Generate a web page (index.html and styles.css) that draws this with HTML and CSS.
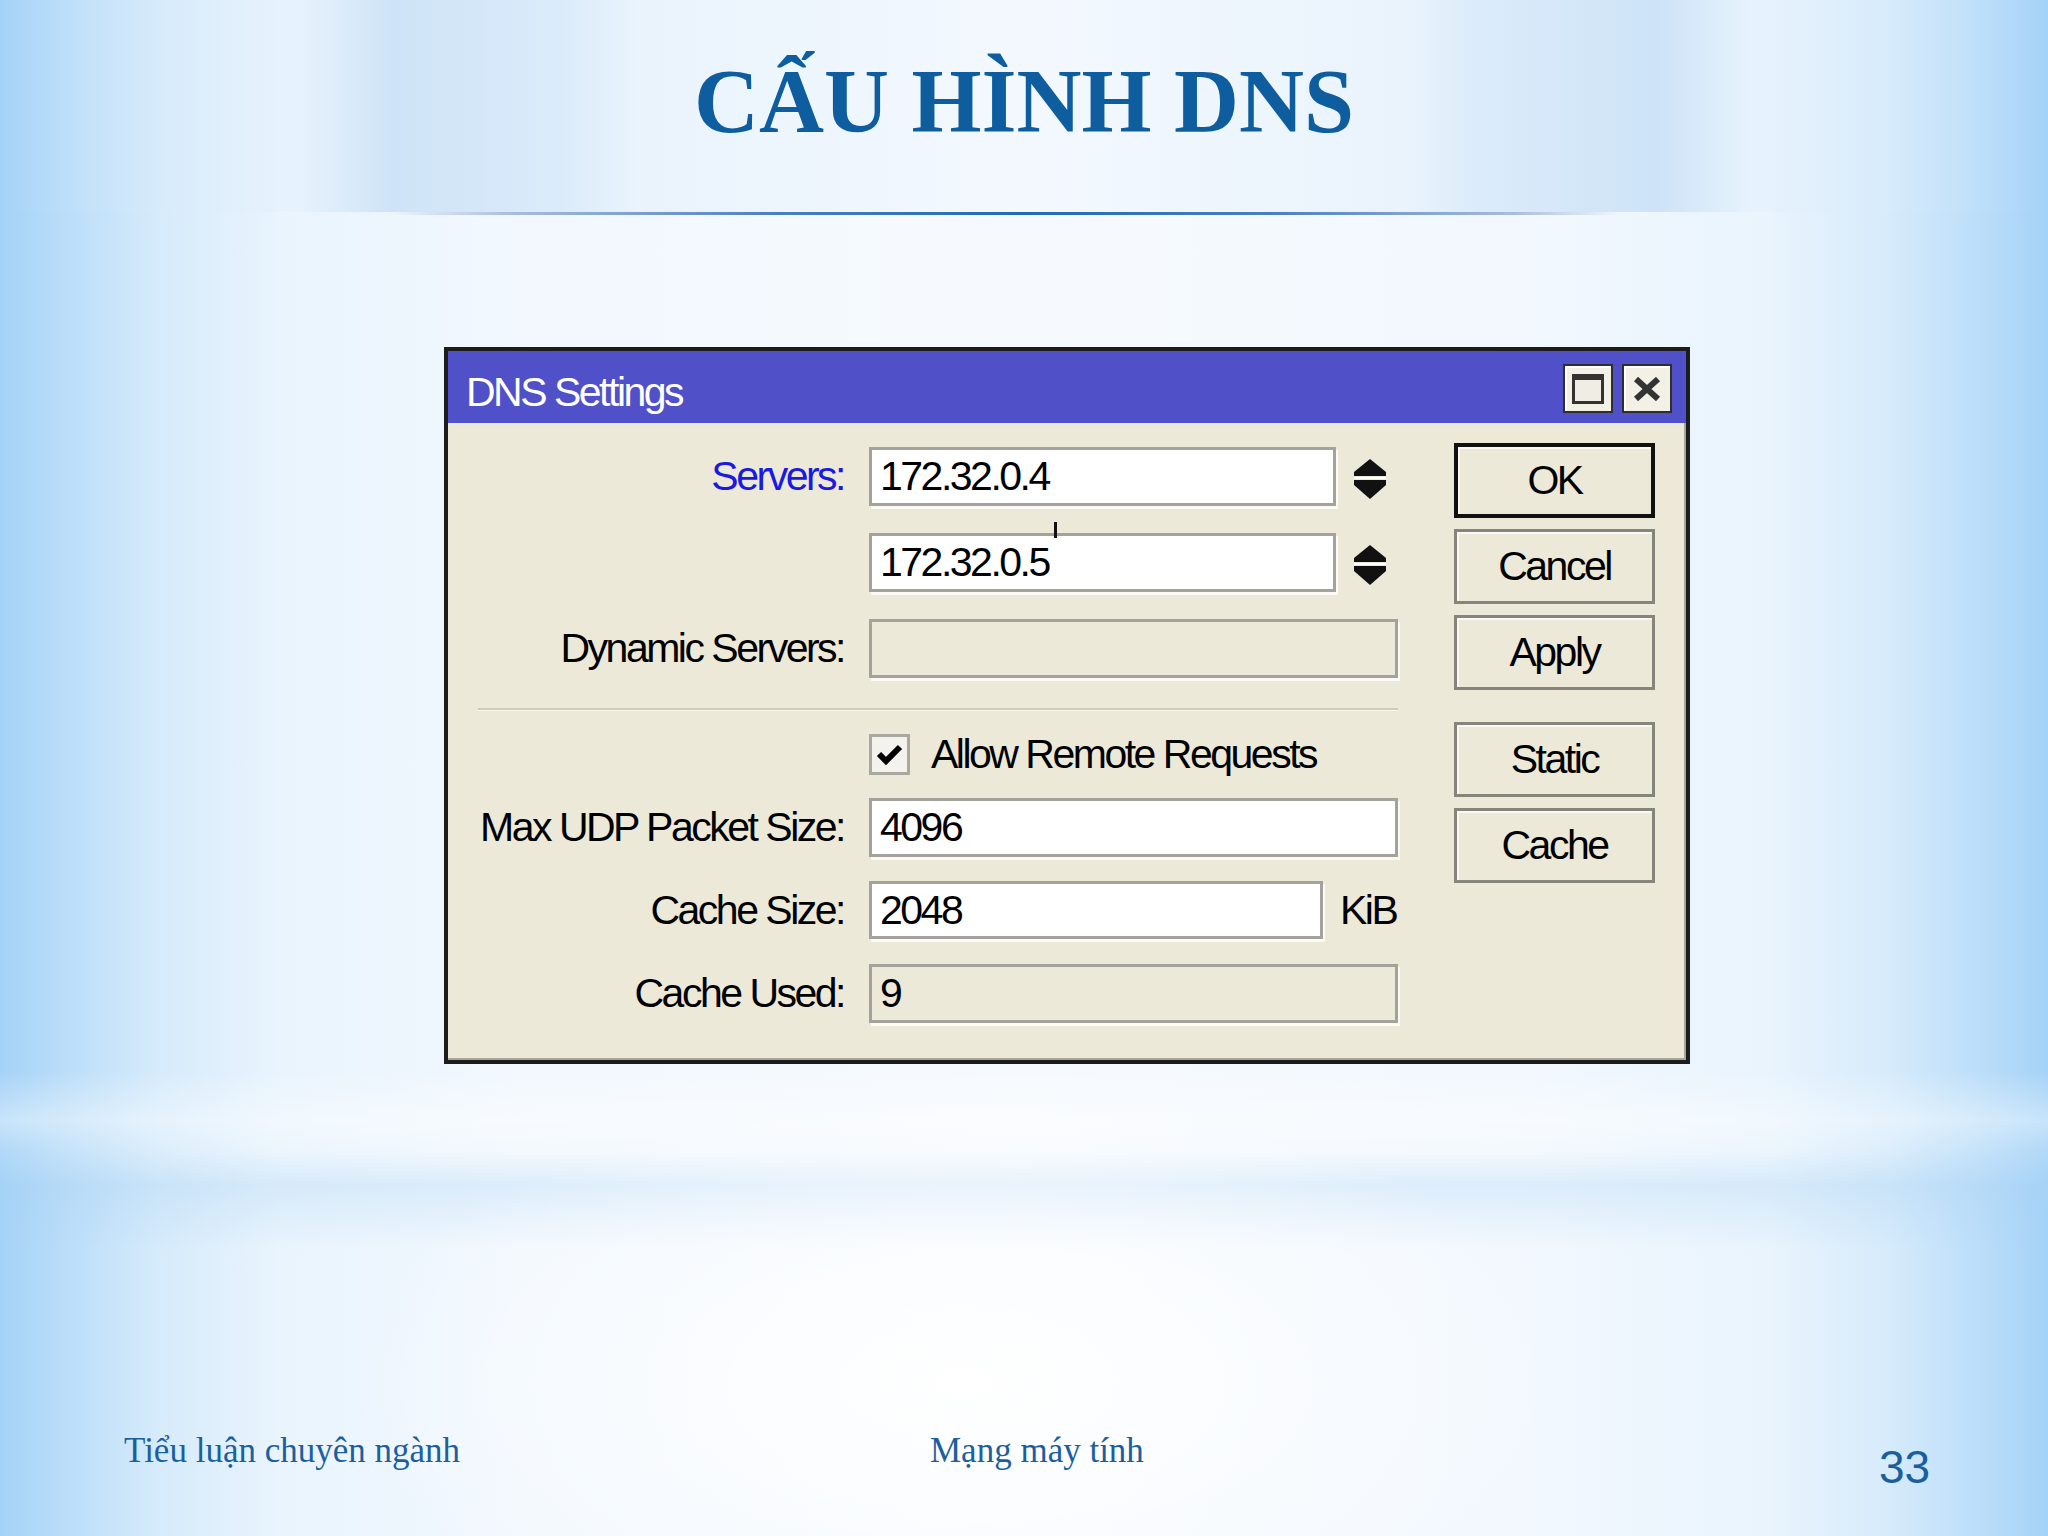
FILE: index.html
```html
<!DOCTYPE html>
<html lang="vi">
<head>
<meta charset="utf-8">
<title>Cấu hình DNS</title>
<link rel="stylesheet" href="styles.css">
</head>
<body>
<div class="slide">
  <header class="head">
    <h1 class="title">CẤU HÌNH DNS</h1>
  </header>
  <div class="rule"></div>

  <div class="dialog">
    <div class="titlebar">
      <span class="wtitle">DNS Settings</span>
      <div class="wbtns">
        <div class="wbtn"><span class="maxicon"></span></div>
        <div class="wbtn">
          <svg class="closeicon" width="28" height="24" viewBox="0 0 28 24">
            <path d="M3 2 L25 22 M25 2 L3 22" stroke="#333" stroke-width="6" fill="none"/>
          </svg>
        </div>
      </div>
    </div>

    <div class="dbody">
      <div class="form">
        <div class="row r1">
          <div class="lbl blue">Servers:</div>
          <div class="field w-short">172.32.0.4</div>
          <svg class="spin" width="32" height="40" viewBox="0 0 32 40">
            <polygon points="16,0 32,13 32,17 0,17 0,13" fill="#111"/>
            <rect x="0" y="18" width="32" height="2" fill="#fff"/>
            <polygon points="0,21 32,21 32,26 16,40 0,26" fill="#111"/>
          </svg>
        </div>
        <div class="row r2">
          <div class="lbl"></div>
          <div class="field w-short">172.32.0.5<span class="cursor"></span></div>
          <svg class="spin" width="32" height="40" viewBox="0 0 32 40">
            <polygon points="16,0 32,13 32,17 0,17 0,13" fill="#111"/>
            <rect x="0" y="18" width="32" height="2" fill="#fff"/>
            <polygon points="0,21 32,21 32,26 16,40 0,26" fill="#111"/>
          </svg>
        </div>
        <div class="row r3">
          <div class="lbl">Dynamic Servers:</div>
          <div class="field w-full disabled"></div>
        </div>
        <div class="sep"></div>
        <div class="row rc">
          <div class="lbl"></div>
          <div class="check">
            <svg width="28" height="22" viewBox="0 0 28 22">
              <path d="M3 10 L10 17 L24 3" stroke="#000" stroke-width="6" fill="none"/>
            </svg>
          </div>
          <span class="ctext">Allow Remote Requests</span>
        </div>
        <div class="row r5">
          <div class="lbl">Max UDP Packet Size:</div>
          <div class="field w-full">4096</div>
        </div>
        <div class="row r6">
          <div class="lbl">Cache Size:</div>
          <div class="field w-mid">2048</div>
          <span class="unit">KiB</span>
        </div>
        <div class="row r7">
          <div class="lbl">Cache Used:</div>
          <div class="field w-full disabled">9</div>
        </div>
      </div>

      <div class="btns">
        <div class="btn default">OK</div>
        <div class="btn">Cancel</div>
        <div class="btn">Apply</div>
        <div class="btn gap">Static</div>
        <div class="btn">Cache</div>
      </div>
    </div>
  </div>

  <footer class="foot">
    <span class="f1">Tiểu luận chuyên ngành</span>
    <span class="f2">Mạng máy tính</span>
    <span class="f3">33</span>
  </footer>
</div>
</body>
</html>
```

FILE: styles.css
```css
html, body {
  margin: 0;
  padding: 0;
}

.slide {
  width: 2048px;
  height: 1536px;
  overflow: hidden;
  font-family: "Liberation Sans", Arial, sans-serif;
  background:
    radial-gradient(ellipse 620px 300px at 47% 90%, rgba(255,255,255,0.95), rgba(255,255,255,0) 100%),
    linear-gradient(to bottom,
      rgba(255,255,255,0) 0px,
      rgba(255,255,255,0) 1070px,
      rgba(255,255,255,0.4) 1120px,
      rgba(255,255,255,0.15) 1150px,
      rgba(170,210,243,0.3) 1185px,
      rgba(255,255,255,0) 1250px),
    linear-gradient(to right,
      #a4d2f7 0px,
      #bcdef9 70px,
      #d6ebfb 160px,
      #e9f4fd 280px,
      #f2f8fe 520px,
      #f6fafe 1024px,
      #f2f8fe 1528px,
      #e9f4fd 1768px,
      #d6ebfb 1888px,
      #bcdef9 1978px,
      #a4d2f7 2048px);
}

/* ---------- header ---------- */
.head {
  height: 212px;
  box-sizing: border-box;
  padding-top: 57px;
  background: linear-gradient(to right,
    rgba(255,255,255,0) 0px,
    rgba(220,236,250,0.25) 300px,
    rgba(180,212,242,0.55) 392px,
    rgba(195,222,246,0.5) 560px,
    rgba(228,240,251,0.6) 640px,
    rgba(240,247,254,0.6) 1024px,
    rgba(228,240,251,0.6) 1404px,
    rgba(195,222,246,0.5) 1480px,
    rgba(180,212,242,0.55) 1659px,
    rgba(220,236,250,0.25) 1750px,
    rgba(255,255,255,0) 2048px);
}

.title {
  margin: 0;
  text-align: center;
  font-family: "Liberation Serif", "Times New Roman", serif;
  font-weight: bold;
  font-size: 90px;
  line-height: 90px;
  color: #0d5d9f;
}

.rule {
  height: 3px;
  background: linear-gradient(to right,
    rgba(120,150,200,0) 19%,
    rgba(120,150,200,0.6) 25%,
    #4a7fbf 38%,
    #1f6cb3 50%,
    #4a7fbf 62%,
    rgba(120,150,200,0.6) 74%,
    rgba(120,150,200,0) 79%);
}

/* ---------- dialog ---------- */
.dialog {
  margin-top: 132px;
  margin-left: 444px;
  width: 1246px;
  box-sizing: border-box;
  border: 4px solid #1c1c1c;
  background: #ece9d8;
  box-shadow: inset -2px -2px 0 #a8a69a;
}

.titlebar {
  height: 72px;
  background: #5050c9;
  display: flex;
  justify-content: space-between;
  align-items: flex-start;
  padding: 0 14px 0 18px;
}

.wtitle {
  margin-top: 21px;
  color: #ffffff;
  font-size: 41px;
  line-height: 41px;
  letter-spacing: -2.5px;
}

.wbtns {
  display: flex;
  gap: 9px;
  margin-top: 13px;
}

.wbtn {
  width: 50px;
  height: 49px;
  box-sizing: border-box;
  border: 2px solid #2e2e2e;
  background: #f3f1e6;
  box-shadow: inset 2px 2px 0 #ffffff;
  display: flex;
  align-items: center;
  justify-content: center;
}

.maxicon {
  display: block;
  width: 32px;
  height: 30px;
  box-sizing: border-box;
  border: 3px solid #333333;
  border-top-width: 6px;
  background: #efede4;
}

.dbody {
  display: flex;
  padding: 20px 29px 37px 30px;
}

.form {
  width: 920px;
  margin-top: 4px;
}

.row {
  display: flex;
  align-items: center;
  height: 59px;
  font-size: 41px;
  letter-spacing: -2.5px;
  color: #000;
}

.r2, .r3 { margin-top: 27px; }
.rc { margin-top: 23px; height: 41px; }
.r5 { margin-top: 23px; }
.r6 { margin-top: 24px; height: 58px; }
.r7 { margin-top: 25px; }

.lbl {
  width: 366px;
  flex-shrink: 0;
  margin-right: 25px;
  text-align: right;
  white-space: nowrap;
}

.lbl.blue {
  color: #1a1ae0;
}

.field {
  position: relative;
  height: 100%;
  box-sizing: border-box;
  border: 3px solid #a3a39b;
  background: #ffffff;
  box-shadow: 2px 3px 0 #fbfaf5;
  padding-left: 8px;
  display: flex;
  align-items: center;
  flex-shrink: 0;
}

.field.disabled {
  background: #ece9d8;
}

.w-short { width: 467px; }
.w-full { width: 529px; }
.w-mid { width: 454px; }

.cursor {
  position: absolute;
  left: 182px;
  top: -14px;
  width: 3px;
  height: 16px;
  background: #111;
}

.spin {
  margin-left: 18px;
  margin-top: 4px;
  flex-shrink: 0;
}

.sep {
  margin-top: 30px;
  height: 0;
  border-top: 2px solid #cfccbd;
  border-bottom: 1px solid #f7f6f0;
}

.check {
  width: 41px;
  height: 41px;
  box-sizing: border-box;
  border: 3px solid #aaa9a0;
  background: #f3f2ec;
  display: flex;
  align-items: center;
  justify-content: center;
  flex-shrink: 0;
}

.ctext {
  margin-left: 21px;
  white-space: nowrap;
}

.unit {
  margin-left: 17px;
}

/* ---------- buttons ---------- */
.btns {
  margin-left: 56px;
  width: 201px;
  display: flex;
  flex-direction: column;
  gap: 11px;
}

.btn {
  height: 75px;
  box-sizing: border-box;
  border: 3px solid #85857c;
  background: #ece9d8;
  box-shadow: inset 2px 2px 0 #f9f8f2;
  display: flex;
  align-items: center;
  justify-content: center;
  font-size: 41px;
  letter-spacing: -2.5px;
  color: #000;
}

.btn.default {
  border: 4px solid #111111;
}

.btn.gap {
  margin-top: 21px;
}

/* ---------- footer ---------- */
.foot {
  margin-top: 367px;
  display: flex;
  align-items: flex-start;
  padding-left: 124px;
  font-family: "Liberation Serif", "Times New Roman", serif;
  font-size: 35px;
  line-height: 40px;
  color: #1c5f9f;
}

.f1 { width: 806px; }
.f2 { width: 949px; }

.f3 {
  margin-top: 13px;
  font-family: "Liberation Sans", Arial, sans-serif;
  font-size: 46px;
  line-height: 46px;
  color: #1a5e9e;
}
```
